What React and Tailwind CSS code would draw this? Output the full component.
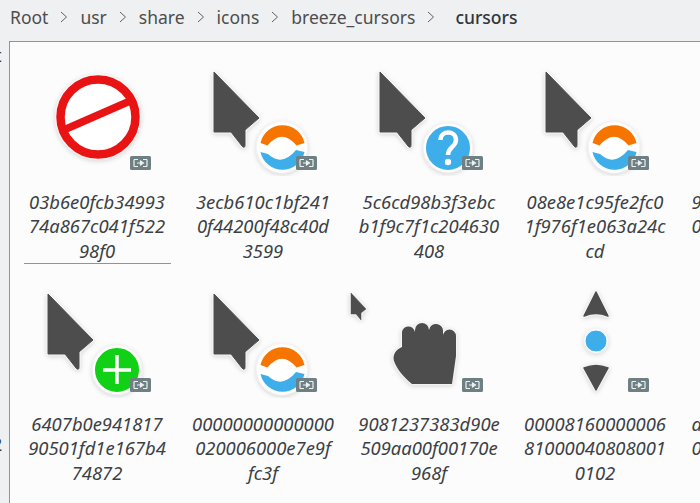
import React from 'react';

const Arrow = () => (
  <path d="M6 8 L6 68 L23 68 L34 82 Q37 85 37 81 L37 66 L51 54 Z" fill="#4d4d4d" stroke="#4d4d4d" strokeWidth="1" strokeLinejoin="round" />
);

const Halo = ({ children }) => (
  <g style={{ filter: 'drop-shadow(0 0 1px #fff) drop-shadow(0 0 1px #fff) drop-shadow(0 1px 2px rgba(0,0,0,0.2))' }}>{children}</g>
);

const LinkBadge = () => (
  <g>
    <rect x="88" y="92" width="21" height="14" rx="1.5" fill="#6e8084" />
    <path d="M92 95.5 H96 M92 102.5 H96 M92 95.5 V102.5 M105 95.5 H101 M105 102.5 H101 M105 95.5 V102.5" stroke="#eef1f1" strokeWidth="1.2" fill="none" />
    <path d="M95 99 H100 M98.5 97 L101.5 99 L98.5 101 Z" stroke="#eef1f1" strokeWidth="1.2" fill="#eef1f1" />
  </g>
);

const Forbidden = () => (
  <>
    <Halo>
      <circle cx="56" cy="53" r="42" fill="#fff" />
    </Halo>
    <circle cx="56" cy="53" r="37.5" fill="#fff" stroke="#ea1313" strokeWidth="8.5" />
    <path d="M24 65 L88 37" stroke="#ea1313" strokeWidth="7.5" />
  </>
);

const Sync = () => (
  <>
    <Halo>
      <circle cx="74" cy="83.5" r="25" fill="#fff" />
    </Halo>
    <path d="M52.5 79 A22.5 22.5 0 0 1 96.5 79 L88.5 81.5 Q74 64 59.5 81.5 Z" fill="#f67400" />
    <path d="M52.5 88 A22.5 22.5 0 0 0 96.5 88 L88 86 Q74 103 60 90 Z" fill="#3daee9" />
  </>
);

const CursorSync = () => (
  <>
    <Halo><Arrow /></Halo>
    <Sync />
  </>
);

const CursorHelp = () => (
  <>
    <Halo><Arrow /></Halo>
    <Halo><circle cx="74" cy="84" r="23" fill="#3daee9" stroke="#fff" strokeWidth="2" /></Halo>
    <path d="M66.5 76 C66.5 66 82 66 82 76 C82 83 74 83 74 91" fill="none" stroke="#fff" strokeWidth="4.5" />
    <circle cx="74" cy="98" r="3.2" fill="#fff" />
  </>
);

const CursorAdd = () => (
  <>
    <Halo><Arrow /></Halo>
    <Halo><circle cx="75" cy="84" r="23" fill="#11d116" stroke="#fff" strokeWidth="2" /></Halo>
    <path d="M75 69 V98 M61 84 H89" stroke="#fff" strokeWidth="3.5" />
  </>
);

const Fist = () => (
  <Halo>
    <path
      d="M38 98 C31 92 23 84 20 75 C18 68 23 63 28 61 L28 48 A6.5 6.5 0 0 1 41 46 L41 44 A7 7 0 0 1 55 44 A7 7 0 0 1 69 46 L69 50 A6.5 6.5 0 0 1 82 50 L82 70 L78 98 Z"
      fill="#4d4d4d"
    />
  </Halo>
);

const Move = () => (
  <>
    <Halo>
      <path d="M56 6 L68 30 Q56 25 44 30 Z" fill="#4d4d4d" stroke="#4d4d4d" strokeWidth="1.5" strokeLinejoin="round" />
    </Halo>
    <Halo>
      <circle cx="56" cy="55" r="11" fill="#3daee9" stroke="#fff" strokeWidth="1" />
    </Halo>
    <Halo>
      <path d="M56 104 L68 82 Q56 77 44 82 Z" fill="#4d4d4d" stroke="#4d4d4d" strokeWidth="1.5" strokeLinejoin="round" />
    </Halo>
  </>
);

const rowOne = [
  { id: 1, icon: <Forbidden />, lines: ['03b6e0fcb34993', '74a867c041f522', '98f0'], selected: true },
  { id: 2, icon: <CursorSync />, lines: ['3ecb610c1bf241', '0f44200f48c40d', '3599'] },
  { id: 3, icon: <CursorHelp />, lines: ['5c6cd98b3f3ebc', 'b1f9c7f1c204630', '408'] },
  { id: 4, icon: <CursorSync />, lines: ['08e8e1c95fe2fc0', '1f976f1e063a24c', 'cd'] },
  { id: 9, lines: ['9', '0'], clipped: true },
];

const rowTwo = [
  { id: 5, icon: <CursorAdd />, lines: ['6407b0e941817', '90501fd1e167b4', '74872'] },
  { id: 6, icon: <CursorSync />, lines: ['00000000000000', '020006000e7e9f', 'fc3f'] },
  { id: 7, icon: <Fist />, lines: ['9081237383d90e', '509aa00f00170e', '968f'] },
  { id: 8, icon: <Move />, lines: ['00008160000006', '81000040808001', '0102'] },
  { id: 10, lines: ['a', '0'], clipped: true },
];

const crumbs = ['Root', 'usr', 'share', 'icons', 'breeze_cursors'];

const Tile = ({ item }) => (
  <div className="flex w-[166px] shrink-0 flex-col items-center">
    <div className="h-[112px] w-[112px] shrink-0">
      {item.icon && (
        <svg width="112" height="112" viewBox="0 0 112 112">
          {item.icon}
          <LinkBadge />
        </svg>
      )}
    </div>
    <div className={`-ml-[2px] mt-[14px] h-[74px] w-[147px] border-b text-[18.4px] italic leading-[24.4px] text-[#3b4045] ${item.clipped ? 'pl-[4px] text-left' : 'text-center'} ${item.selected ? 'border-b-[#3daee9]' : 'border-b-transparent'}`}>
      {item.lines.map((line) => (
        <div key={line} className="whitespace-nowrap">{line}</div>
      ))}
    </div>
  </div>
);

export default function App() {
  return (
    <div className="relative flex h-[503px] w-[700px] flex-col overflow-hidden bg-[#eff0f1] font-['Noto_Sans',sans-serif]">
      <div className="flex h-[41px] shrink-0 items-center pb-[7px] pl-[10px] text-[17.5px] text-[#4d4d4d]">
        {crumbs.map((c) => (
          <React.Fragment key={c}>
            <span>{c}</span>
            <svg width="8" height="12" viewBox="0 0 8 12" className="mx-[12px]">
              <path d="M1 1 L6.5 6 L1 11" fill="none" stroke="#5c6166" strokeWidth="1" />
            </svg>
          </React.Fragment>
        ))}
        <span className="ml-[8px] font-medium text-[#31363b]">cursors</span>
      </div>
      <div className="flex min-h-0 flex-1">
        <div className="flex w-[9px] shrink-0 flex-col justify-between overflow-hidden pb-[47px] pt-[2px] text-[18px] leading-[24px] text-[#31363b]">
          <span className="-ml-[5px] w-[14px]">t</span>
          <span className="-ml-[8px] w-[17px]">2</span>
        </div>
        <div className="min-w-0 flex-1 overflow-hidden border-l border-t border-l-[#3daee9] border-t-[#3daee9] bg-[#fcfcfc]">
          <div className="flex pl-[5px] pt-[22px]">
            {rowOne.map((item) => <Tile key={item.id} item={item} />)}
          </div>
          <div className="flex pl-[5px] pt-[22px]">
            {rowTwo.map((item) => <Tile key={item.id} item={item} />)}
          </div>
        </div>
      </div>
      {/* mouse pointer caught in the screenshot */}
      <svg width="24" height="34" viewBox="0 0 24 34" className="absolute left-[346px] top-[290px]">
        <Halo>
          <path d="M5 3 L5 24 L10 24 L15 30 L15 23 L20 19 Z" fill="#4d4d4d" stroke="#4d4d4d" strokeWidth="0.5" strokeLinejoin="round" />
        </Halo>
      </svg>
    </div>
  );
}
